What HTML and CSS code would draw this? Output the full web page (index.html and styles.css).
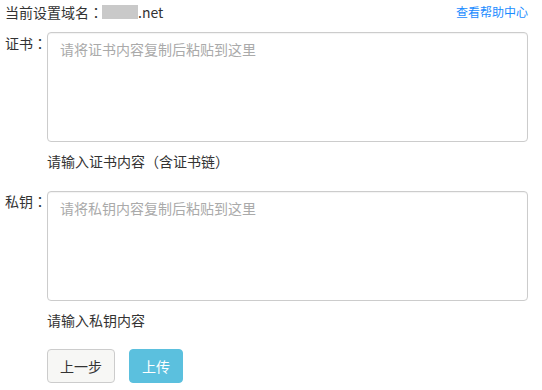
FILE: index.html
```html
<!DOCTYPE html>
<html lang="zh-CN">
<head>
<meta charset="utf-8">
<title>上传证书</title>
<link rel="stylesheet" href="styles.css">
</head>
<body>
<div class="page">
  <div class="top">
    <div class="domain">当前设置域名<span class="punct">：</span><span class="mask"></span>.net</div>
    <a class="help" href="#">查看帮助中心</a>
  </div>
  <div class="field">
    <label class="label">证书<span class="punct">：</span></label>
    <div class="control">
      <textarea class="input" placeholder="请将证书内容复制后粘贴到这里"></textarea>
      <div class="hint">请输入证书内容<span class="punct">（</span>含证书链<span class="punct">）</span></div>
    </div>
  </div>
  <div class="field field-second">
    <label class="label label-second">私钥<span class="punct">：</span></label>
    <div class="control">
      <textarea class="input" placeholder="请将私钥内容复制后粘贴到这里"></textarea>
      <div class="hint">请输入私钥内容</div>
    </div>
  </div>
  <div class="actions">
    <button class="btn btn-default">上一步</button>
    <button class="btn btn-info">上传</button>
  </div>
</div>
</body>
</html>
```
FILE: styles.css
```css
html, body {
  margin: 0;
  padding: 0;
  background: #fff;
}
body {
  font-family: "Noto Sans CJK SC", "Noto Sans", sans-serif;
  font-size: 14px;
  line-height: 20px;
  color: #333;
  text-spacing-trim: space-all;
}
.punct {
  display: inline-block;
  width: 14px;
  text-align: center;
  font-family: "Noto Sans CJK TC", "Noto Sans CJK SC", sans-serif;
}
.page {
  width: 523px;
  padding: 2px 0 0 5px;
}
.top {
  display: flex;
  justify-content: space-between;
  align-items: center;
  height: 20px;
}
.domain {
  display: flex;
  align-items: center;
}
.mask {
  display: inline-block;
  width: 36px;
  height: 14px;
  background: #c9c9c9;
  margin-left: -1px;
}
.help {
  font-size: 12px;
  color: #1a8cff;
  text-decoration: none;
}
.field {
  display: flex;
  margin-top: 10px;
}
.field-second {
  margin-top: 20px;
}
.label {
  width: 42px;
  flex: none;
  padding-top: 1px;
  white-space: nowrap;
}
.label-second {
  padding-top: 0;
}
.control {
  display: flex;
  flex-direction: column;
}
.input {
  box-sizing: border-box;
  width: 481px;
  height: 110px;
  margin: 0;
  border: 1px solid #ccc;
  border-radius: 4px;
  padding: 6px 12px;
  font-family: inherit;
  font-size: 14px;
  line-height: 20px;
  color: #333;
  resize: none;
  box-shadow: inset 0 1px 1px rgba(0,0,0,0.05);
}
.input::placeholder {
  color: #aaa;
}
.hint {
  margin-top: 9px;
}
.actions {
  display: flex;
  gap: 14px;
  margin: 19px 0 0 42px;
}
.btn {
  box-sizing: border-box;
  height: 34px;
  padding: 6px 12px;
  border: 1px solid #ccc;
  border-radius: 4px;
  font-family: inherit;
  font-size: 14px;
  line-height: 20px;
}
.btn-default {
  background: #f7f7f5;
  color: #333;
}
.btn-info {
  background: #5bc0de;
  border-color: #5bc0de;
  color: #fff;
}
```
